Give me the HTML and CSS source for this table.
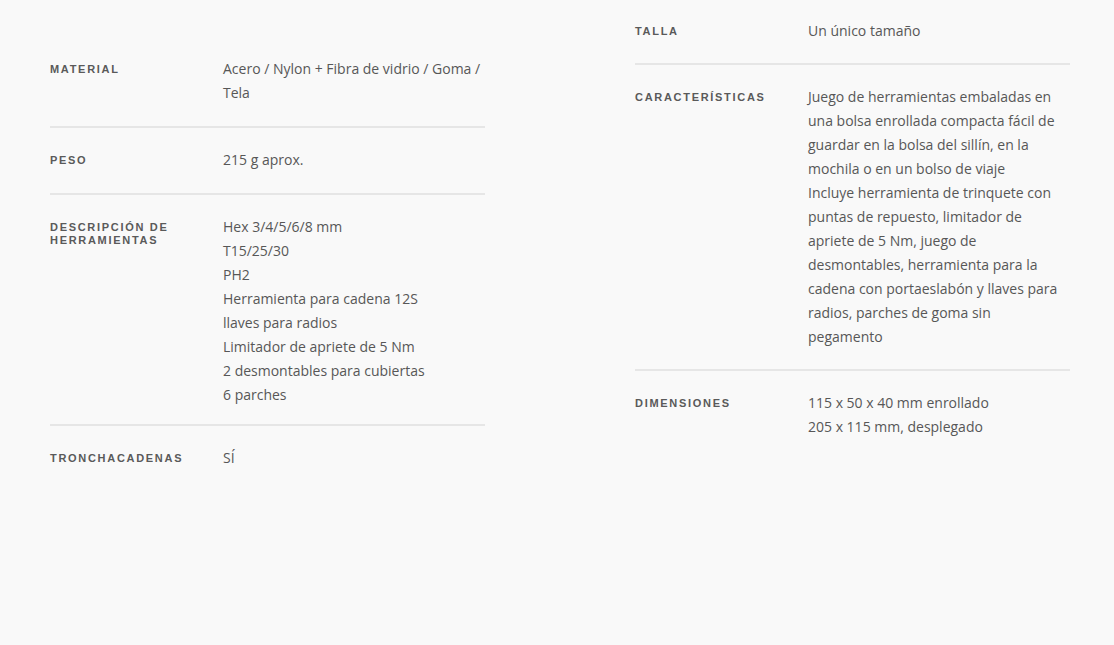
FILE: index.html
```html
<!DOCTYPE html>
<html lang="es">

<head>
    <meta charset="UTF-8">
    <meta name="viewport" content="width=device-width, initial-scale=1.0">
    <title>Especificaciones</title>
    <link rel="stylesheet" href="styles.css">
</head>

<body>

    <div class="specs">
        <div class="spec-col spec-col-left">
            <div class="spec-row">
                <div class="spec-label">Material</div>
                <div class="spec-value">Acero / Nylon + Fibra de vidrio / Goma / Tela</div>
            </div>
            <div class="spec-row">
                <div class="spec-label">Peso</div>
                <div class="spec-value">215 g aprox.</div>
            </div>
            <div class="spec-row list">
                <div class="spec-label">Descripción de herramientas</div>
                <div class="spec-value">
                    Hex 3/4/5/6/8 mm<br>
                    T15/25/30<br>
                    PH2<br>
                    Herramienta para cadena 12S<br>
                    llaves para radios<br>
                    Limitador de apriete de 5 Nm<br>
                    2 desmontables para cubiertas<br>
                    6 parches
                </div>
            </div>
            <div class="spec-row last">
                <div class="spec-label">Tronchacadenas</div>
                <div class="spec-value">SÍ</div>
            </div>
        </div>

        <div class="spec-col spec-col-right">
            <div class="spec-row">
                <div class="spec-label">Talla</div>
                <div class="spec-value">Un único tamaño</div>
            </div>
            <div class="spec-row">
                <div class="spec-label">Características</div>
                <div class="spec-value">Juego de herramientas embaladas en una bolsa enrollada compacta fácil de guardar en la bolsa del sillín, en la mochila o en un bolso de viaje<br>Incluye herramienta de trinquete con puntas de repuesto, limitador de apriete de 5 Nm, juego de desmontables, herramienta para la cadena con portaeslabón y llaves para radios, parches de goma sin pegamento</div>
            </div>
            <div class="spec-row last">
                <div class="spec-label">Dimensiones</div>
                <div class="spec-value">
                    115 x 50 x 40 mm enrollado<br>
                    205 x 115 mm, desplegado
                </div>
            </div>
        </div>
    </div>

</body>

</html>
```

FILE: styles.css
```css
body {
    margin: 0;
    padding: 0;
    background-color: #f9f9f9;
    color: #575757;
    font-family: 'Open Sans', 'Liberation Sans', Arial, sans-serif;
    min-height: 100vh;
}

.specs {
    display: flex;
    align-items: flex-start;
    gap: 150px;
    padding: 0 44px 0 50px;
}

.spec-col {
    width: 435px;
}

.spec-col-left {
    padding-top: 37px;
}

.spec-col-right {
    margin-top: -1px;
}

.spec-row {
    display: grid;
    grid-template-columns: 173px 1fr;
    padding: 20px 0;
    border-bottom: 2px solid #e6e6e6;
}

.spec-col-left .spec-row {
    padding-bottom: 21px;
}

.spec-col-left .spec-row.list {
    padding-bottom: 17px;
}

.spec-row.last {
    border-bottom: none;
}

.spec-label {
    padding-top: 6px;
    padding-right: 20px;
    font-family: 'Liberation Sans', Arial, sans-serif;
    font-size: 11px;
    font-weight: bold;
    line-height: 13px;
    letter-spacing: 1.7px;
    text-transform: uppercase;
    color: #5a5a5a;
}

.spec-value {
    font-size: 14px;
    line-height: 24px;
}

.spec-col-right .spec-value {
    padding-right: 8px;
}
```
